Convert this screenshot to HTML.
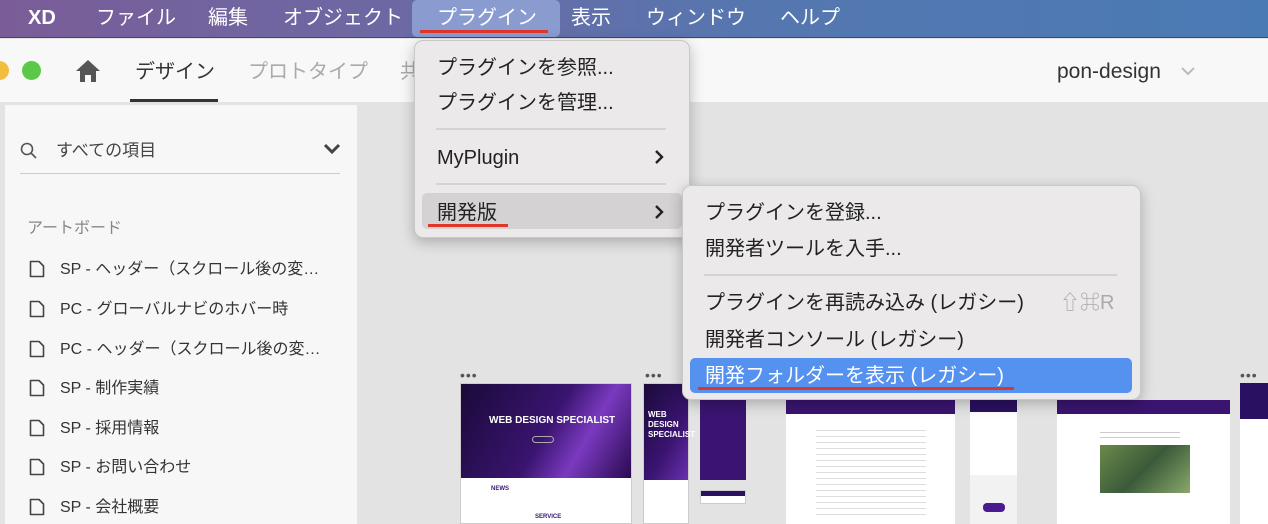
<!DOCTYPE html>
<html><head><meta charset="utf-8"><style>
*{margin:0;padding:0;box-sizing:border-box}
body{width:1268px;height:524px;overflow:hidden;position:relative;background:#e3e3e3;font-family:"Liberation Sans","Noto Sans CJK JP",sans-serif;}
.a{position:absolute;white-space:nowrap;line-height:1}
#mb{left:0;top:0;width:1268px;height:38px;background:linear-gradient(90deg,#7a5d98,#6a6aa5 35%,#5577b0 60%,#4a7ab4);border-bottom:1px solid #3a4a6a}
.mi{color:#fff;font-size:20px;top:8px}
#tb{left:0;top:39px;width:1268px;height:63px;background:#f8f8f8}
#sb{left:5px;top:105px;width:352px;height:419px;background:#f7f7f7}
.li{font-size:16px;color:#333;left:60px;margin-top:2px}
.ic{left:29px}
.menu{background:#ebe9ea;border-radius:9px;box-shadow:0 4px 14px rgba(0,0,0,.25);border:1px solid #c9c7c8}
.mt{font-size:20px;color:#222;margin-top:1px}
.sep{height:2px;background:#d4d2d3}
.dots{font-size:14px;color:#555;letter-spacing:1px;top:368px}
</style></head><body>
<div class="a" id="mb"></div>
<div class="a" style="left:412px;top:0;width:148px;height:37px;background:#8a9bd0;border-radius:5px"></div>
<div class="a mi" style="left:28px;font-weight:bold">XD</div>
<div class="a mi" style="left:96px">ファイル</div>
<div class="a mi" style="left:208px">編集</div>
<div class="a mi" style="left:283px">オブジェクト</div>
<div class="a mi" style="left:437px">プラグイン</div>
<div class="a" style="left:420px;top:30px;width:128px;height:3px;background:#e0352b"></div>
<div class="a mi" style="left:571px">表示</div>
<div class="a mi" style="left:646px">ウィンドウ</div>
<div class="a mi" style="left:780px">ヘルプ</div>

<div class="a" id="tb"></div>
<div class="a" style="left:-10px;top:61px;width:19px;height:19px;border-radius:50%;background:#f3bd3d"></div>
<div class="a" style="left:22px;top:61px;width:19px;height:19px;border-radius:50%;background:#5cc84a"></div>
<svg class="a" style="left:74px;top:58px" width="28" height="26" viewBox="0 0 28 26"><path d="M14 2 L2 13 H6 V24 H11 V17 H17 V24 H22 V13 H26 Z" fill="#555"/></svg>
<div class="a" style="left:135px;top:62px;font-size:20px;color:#333">デザイン</div>
<div class="a" style="left:130px;top:99px;width:88px;height:3px;background:#333"></div>
<div class="a" style="left:248px;top:62px;font-size:20px;color:#aaa">プロトタイプ</div>
<div class="a" style="left:400px;top:62px;font-size:20px;color:#aaa">共</div>
<div class="a" style="left:1057px;top:61px;font-size:21px;color:#333">pon-design</div>
<svg class="a" style="left:1180px;top:66px" width="16" height="10"><path d="M2 2 L8 8 L14 2" stroke="#bbb" stroke-width="2" fill="none"/></svg>

<div class="a" id="sb"></div>
<svg class="a" style="left:20px;top:142px" width="18" height="18"><circle cx="7" cy="7" r="5.5" stroke="#555" stroke-width="1.6" fill="none"/><path d="M11 11 L16 16" stroke="#555" stroke-width="1.6"/></svg>
<div class="a" style="left:56px;top:142px;font-size:17px;color:#444">すべての項目</div>
<svg class="a" style="left:323px;top:143px" width="18" height="12"><path d="M2 2 L9 9 L16 2" stroke="#444" stroke-width="3" fill="none"/></svg>
<div class="a" style="left:20px;top:173px;width:320px;height:1px;background:#ccc"></div>
<div class="a" style="left:27px;top:221px;font-size:16px;color:#888">アートボード</div>
<svg width="0" height="0" style="position:absolute"><defs><symbol id="d" viewBox="0 0 16 18"><path d="M1.5 1.5 H10 L14.5 6 V16.5 H1.5 Z" fill="none" stroke="#444" stroke-width="1.6" stroke-linejoin="round"/></symbol></defs></svg>
<svg class="a ic" style="top:260px" width="16" height="18"><use href="#d"/></svg><div class="a li" style="top:260px">SP - ヘッダー（スクロール後の変…</div>
<svg class="a ic" style="top:300px" width="16" height="18"><use href="#d"/></svg><div class="a li" style="top:300px">PC - グローバルナビのホバー時</div>
<svg class="a ic" style="top:340px" width="16" height="18"><use href="#d"/></svg><div class="a li" style="top:340px">PC - ヘッダー（スクロール後の変…</div>
<svg class="a ic" style="top:379px" width="16" height="18"><use href="#d"/></svg><div class="a li" style="top:379px">SP - 制作実績</div>
<svg class="a ic" style="top:419px" width="16" height="18"><use href="#d"/></svg><div class="a li" style="top:419px">SP - 採用情報</div>
<svg class="a ic" style="top:458px" width="16" height="18"><use href="#d"/></svg><div class="a li" style="top:458px">SP - お問い合わせ</div>
<svg class="a ic" style="top:498px" width="16" height="18"><use href="#d"/></svg><div class="a li" style="top:498px">SP - 会社概要</div>

<!-- artboards -->
<div class="a dots" style="left:460px">•••</div>
<div class="a dots" style="left:645px">•••</div>
<div class="a dots" style="left:1240px">•••</div>
<div class="a" style="left:460px;top:383px;width:172px;height:141px;background:#fff;border:1px solid #ccc"></div>
<div class="a" style="left:461px;top:384px;width:170px;height:94px;background:linear-gradient(120deg,#1a0a3a,#3a1470 50%,#7a3ac0 70%,#2a0a50)"></div>
<div class="a" style="left:489px;top:416px;font-size:10px;font-weight:bold;color:#fff">WEB DESIGN SPECIALIST</div>
<div class="a" style="left:532px;top:436px;width:22px;height:7px;border:1px solid #aaa;border-radius:4px"></div>
<div class="a" style="left:491px;top:486px;font-size:6px;font-weight:bold;color:#3a1470">NEWS</div>
<div class="a" style="left:535px;top:514px;font-size:6px;font-weight:bold;color:#3a1470">SERVICE</div>
<div class="a" style="left:643px;top:383px;width:46px;height:141px;background:#fff;border:1px solid #ccc"></div>
<div class="a" style="left:644px;top:384px;width:44px;height:96px;background:linear-gradient(120deg,#1a0a3a,#3a1470 60%,#6a30b0)"></div>
<div class="a" style="left:648px;top:410px;font-size:8px;font-weight:bold;color:#fff;line-height:10px">WEB<br>DESIGN<br>SPECIALIST</div>
<div class="a" style="left:700px;top:400px;width:46px;height:80px;background:#3a1470"></div>
<div class="a" style="left:700px;top:490px;width:46px;height:14px;background:#fff;border:1px solid #ccc"></div>
<div class="a" style="left:701px;top:491px;width:44px;height:5px;background:#2a1060"></div>
<div class="a" style="left:786px;top:400px;width:169px;height:124px;background:#fff"></div>
<div class="a" style="left:786px;top:400px;width:169px;height:14px;background:#3a1470"></div>
<div class="a" style="left:816px;top:425px;width:110px;height:95px;background:repeating-linear-gradient(#fff 0 5px,#ddd 5px 6px)"></div>
<div class="a" style="left:970px;top:400px;width:47px;height:124px;background:#fff"></div>
<div class="a" style="left:970px;top:400px;width:47px;height:12px;background:#2a1060"></div>
<div class="a" style="left:970px;top:475px;width:47px;height:49px;background:#f2f2f2"></div>
<div class="a" style="left:983px;top:503px;width:22px;height:9px;background:#4a1a90;border-radius:4px"></div>
<div class="a" style="left:1057px;top:400px;width:173px;height:124px;background:#fff"></div>
<div class="a" style="left:1057px;top:400px;width:173px;height:14px;background:#3a1470"></div>
<div class="a" style="left:1100px;top:428px;width:80px;height:10px;background:repeating-linear-gradient(#fff 0 4px,#ccc 4px 5px)"></div>
<div class="a" style="left:1100px;top:445px;width:90px;height:48px;background:linear-gradient(135deg,#6a8a4a,#3a5a3a 50%,#8aa86a)"></div>
<div class="a" style="left:1240px;top:383px;width:28px;height:141px;background:#fff"></div>
<div class="a" style="left:1240px;top:383px;width:28px;height:36px;background:#2a1060"></div>

<!-- menu 1 -->
<div class="a menu" style="left:414px;top:40px;width:276px;height:198px"></div>
<div class="a mt" style="left:437px;top:57px">プラグインを参照...</div>
<div class="a mt" style="left:437px;top:92px">プラグインを管理...</div>
<div class="a sep" style="left:436px;top:128px;width:230px"></div>
<div class="a mt" style="left:437px;top:147px">MyPlugin</div>
<svg class="a" style="left:654px;top:149px" width="10" height="16"><path d="M2 2 L8 8 L2 14" stroke="#222" stroke-width="2.4" fill="none"/></svg>
<div class="a sep" style="left:436px;top:183px;width:230px"></div>
<div class="a" style="left:422px;top:193px;width:260px;height:36px;background:#d4d2d3;border-radius:5px"></div>
<div class="a mt" style="left:437px;top:202px">開発版</div>
<svg class="a" style="left:654px;top:204px" width="10" height="16"><path d="M2 2 L8 8 L2 14" stroke="#222" stroke-width="2.4" fill="none"/></svg>
<div class="a" style="left:428px;top:224px;width:80px;height:3px;background:#e0352b"></div>

<!-- submenu -->
<div class="a menu" style="left:682px;top:185px;width:459px;height:215px"></div>
<div class="a mt" style="left:705px;top:202px">プラグインを登録...</div>
<div class="a mt" style="left:705px;top:238px">開発者ツールを入手...</div>
<div class="a sep" style="left:704px;top:274px;width:413px"></div>
<div class="a mt" style="left:705px;top:292px">プラグインを再読み込み (レガシー)</div>
<div class="a mt" style="left:1060px;top:292px;color:#aaa">⇧⌘R</div>
<div class="a mt" style="left:705px;top:329px">開発者コンソール (レガシー)</div>
<div class="a" style="left:690px;top:358px;width:442px;height:35px;background:#5592ef;border-radius:5px"></div>
<div class="a mt" style="left:705px;top:365px;color:#fff">開発フォルダーを表示 (レガシー)</div>
<div class="a" style="left:698px;top:387px;width:316px;height:3px;background:#e0352b"></div>
</body></html>
